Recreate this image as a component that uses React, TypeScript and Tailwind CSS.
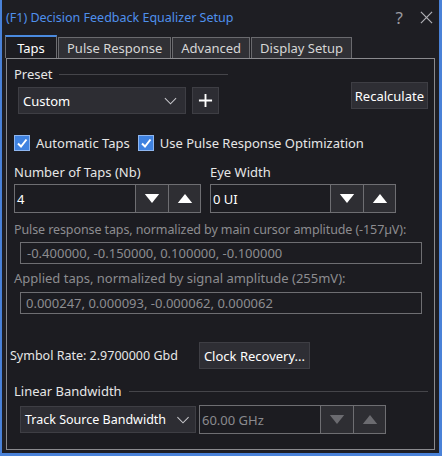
import React from 'react';

const font = { fontFamily: '"Noto Sans", "DejaVu Sans", sans-serif' };

function Chevron({ className = '' }: { className?: string }) {
  return (
    <svg viewBox="0 0 16 10" className={className} fill="none" stroke="currentColor" strokeWidth="1.3">
      <path d="M1 1.5 8 8.5 15 1.5" />
    </svg>
  );
}

function Tri({ up, dim }: { up?: boolean; dim?: boolean }) {
  return (
    <svg viewBox="0 0 16 10" className="h-[9px] w-[16px]">
      <path d={up ? 'M0 10 8 0 16 10Z' : 'M0 0 16 0 8 10Z'} fill={dim ? '#6b6b70' : '#ffffff'} />
    </svg>
  );
}

function Check() {
  return (
    <span className="flex h-[16px] w-[16px] shrink-0 items-center justify-center border border-[#8fb6ef] bg-[#3f82e0]">
      <svg viewBox="0 0 12 12" className="h-[12px] w-[12px]" fill="none" stroke="#ffffff" strokeWidth="2">
        <path d="M2 6.5 5 9.5 10.5 2.5" />
      </svg>
    </span>
  );
}

function Spin({ value, width, dim }: { value: string; width: string; dim?: boolean }) {
  return (
    <div className="flex h-[29px] border border-[#6e6e72]">
      <div className={`flex items-center ${width} pl-[2px] ${dim ? 'text-[#8a8a8e]' : 'text-white'} bg-[#1c1c21]`}>
        {value}
      </div>
      <div className="flex w-[33px] items-center justify-center border-l border-[#6e6e72] bg-[#2e2e33]">
        <Tri dim={dim} />
      </div>
      <div className="flex w-[32px] items-center justify-center border-l border-[#6e6e72] bg-[#2e2e33]">
        <Tri up dim={dim} />
      </div>
    </div>
  );
}

export default function App() {
  const tabs = ['Pulse Response', 'Advanced', 'Display Setup'];
  return (
    <div
      className="flex h-[456px] w-[442px] flex-col border-x-[2px] border-b-[3px] border-r-[3px] border-[#4a82d8] bg-[#1e1e23] text-[13px] leading-[16px] text-[#e6e6e6]"
      style={font}
    >
      {/* title bar */}
      <div className="flex h-[35px] items-center pl-[4px] pr-[6px]">
        <span className="text-[12.5px] text-[#4f90ec]">(F1) Decision Feedback Equalizer Setup</span>
        <span className="ml-auto mr-[17px] text-[17px] leading-[20px] text-[#9a9aa0]">?</span>
        <svg viewBox="0 0 14 14" className="h-[13px] w-[13px]" stroke="#b0b0b5" strokeWidth="1.3">
          <path d="M1 1 13 13M13 1 1 13" />
        </svg>
      </div>

      {/* tabs */}
      <div className="flex h-[23px] items-end pl-[3px]">
        <div className="flex h-[23px] w-[52px] items-center justify-center border-x border-t-[2px] border-[#6e6e72] border-t-[#4a8ae0] bg-[#1c1c21] text-white">
          Taps
        </div>
        {tabs.map((t) => (
          <div
            key={t}
            className="ml-[1px] flex h-[21px] items-center border border-b-0 border-[#6a6a6e] bg-[#303035] px-[8px] text-[#d6d6d6]"
          >
            {t}
          </div>
        ))}
      </div>

      {/* panel */}
      <div className="mx-[4px] mb-[3px] flex flex-1 flex-col border border-[#8a8a8e] bg-[#1c1c21] pl-[7px] pr-[6px]">
        <div className="mt-[7px] flex items-center gap-[6px] pr-[200px]">
          <span>Preset</span>
          <div className="h-px flex-1 bg-[#45454a]" />
        </div>

        <div className="flex items-start">
          <div className="ml-[4px] mt-[5px] flex h-[27px] w-[168px] items-center justify-between border border-[#3e3e44] bg-[#2d2d33] pl-[4px] pr-[7px] text-white">
            <span>Custom</span>
            <Chevron className="h-[8px] w-[15px] text-[#c8c8cc]" />
          </div>
          <div className="ml-[6px] mt-[5px] flex h-[27px] w-[27px] items-center justify-center border border-[#3e3e44] bg-[#2d2d33]">
            <svg viewBox="0 0 16 16" className="h-[15px] w-[15px]" stroke="#ffffff" strokeWidth="2">
              <path d="M8 1v14M1 8h14" />
            </svg>
          </div>
          <div className="ml-auto flex h-[27px] items-center border border-[#3e3e44] bg-[#2e2e34] px-[3px] text-white">
            Recalculate
          </div>
        </div>

        <div className="mt-[21px] flex items-center">
          <Check />
          <span className="ml-[6px]">Automatic Taps</span>
          <span className="ml-[8px]">
            <Check />
          </span>
          <span className="ml-[6px]">Use Pulse Response Optimization</span>
        </div>

        <div className="mt-[13px] flex gap-[9px]">
          <div className="flex flex-col gap-[4px]">
            <span>Number of Taps (Nb)</span>
            <Spin value="4" width="w-[120px]" />
          </div>
          <div className="flex flex-col gap-[4px]">
            <span>Eye Width</span>
            <Spin value="0 UI" width="w-[119px]" />
          </div>
        </div>

        <div className="mt-[9px] whitespace-nowrap text-[12.5px] tracking-[-0.1px] text-[#8c8c90]">
          Pulse response taps, normalized by main cursor amplitude (-157µV):
        </div>
        <div className="ml-[6px] mt-[4px] flex h-[22px] w-[402px] items-center border border-[#6e6e72] px-[6px] text-[#8c8c90]">
          -0.400000, -0.150000, 0.100000, -0.100000
        </div>
        <div className="mt-[6px] text-[#8c8c90]">Applied taps, normalized by signal amplitude (255mV):</div>
        <div className="ml-[6px] mt-[6px] flex h-[22px] w-[402px] items-center border border-[#6e6e72] px-[5px] text-[#8c8c90]">
          0.000247, 0.000093, -0.000062, 0.000062
        </div>

        <div className="-ml-[4px] mt-[28px] flex items-center">
          <span className="text-[12.5px]">Symbol Rate: 2.9700000 Gbd</span>
          <div className="ml-[21px] flex h-[27px] items-center border border-[#3e3e44] bg-[#2e2e34] px-[4px] text-white">
            Clock Recovery...
          </div>
        </div>

        <div className="mt-[14px] flex items-center gap-[7px]">
          <span>Linear Bandwidth</span>
          <div className="h-px flex-1 bg-[#45454a]" />
        </div>

        <div className="mt-[6px] flex items-center pl-[6px]">
          <div className="flex h-[27px] w-[176px] items-center justify-between whitespace-nowrap border border-[#3e3e44] bg-[#2d2d33] pl-[4px] pr-[5px] text-[12.5px] text-white">
            <span>Track Source Bandwidth</span>
            <Chevron className="h-[8px] w-[14px] shrink-0 text-[#c8c8cc]" />
          </div>
          <div className="ml-[3px]">
            <Spin value="60.00 GHz" width="w-[120px]" dim />
          </div>
        </div>
      </div>
    </div>
  );
}
